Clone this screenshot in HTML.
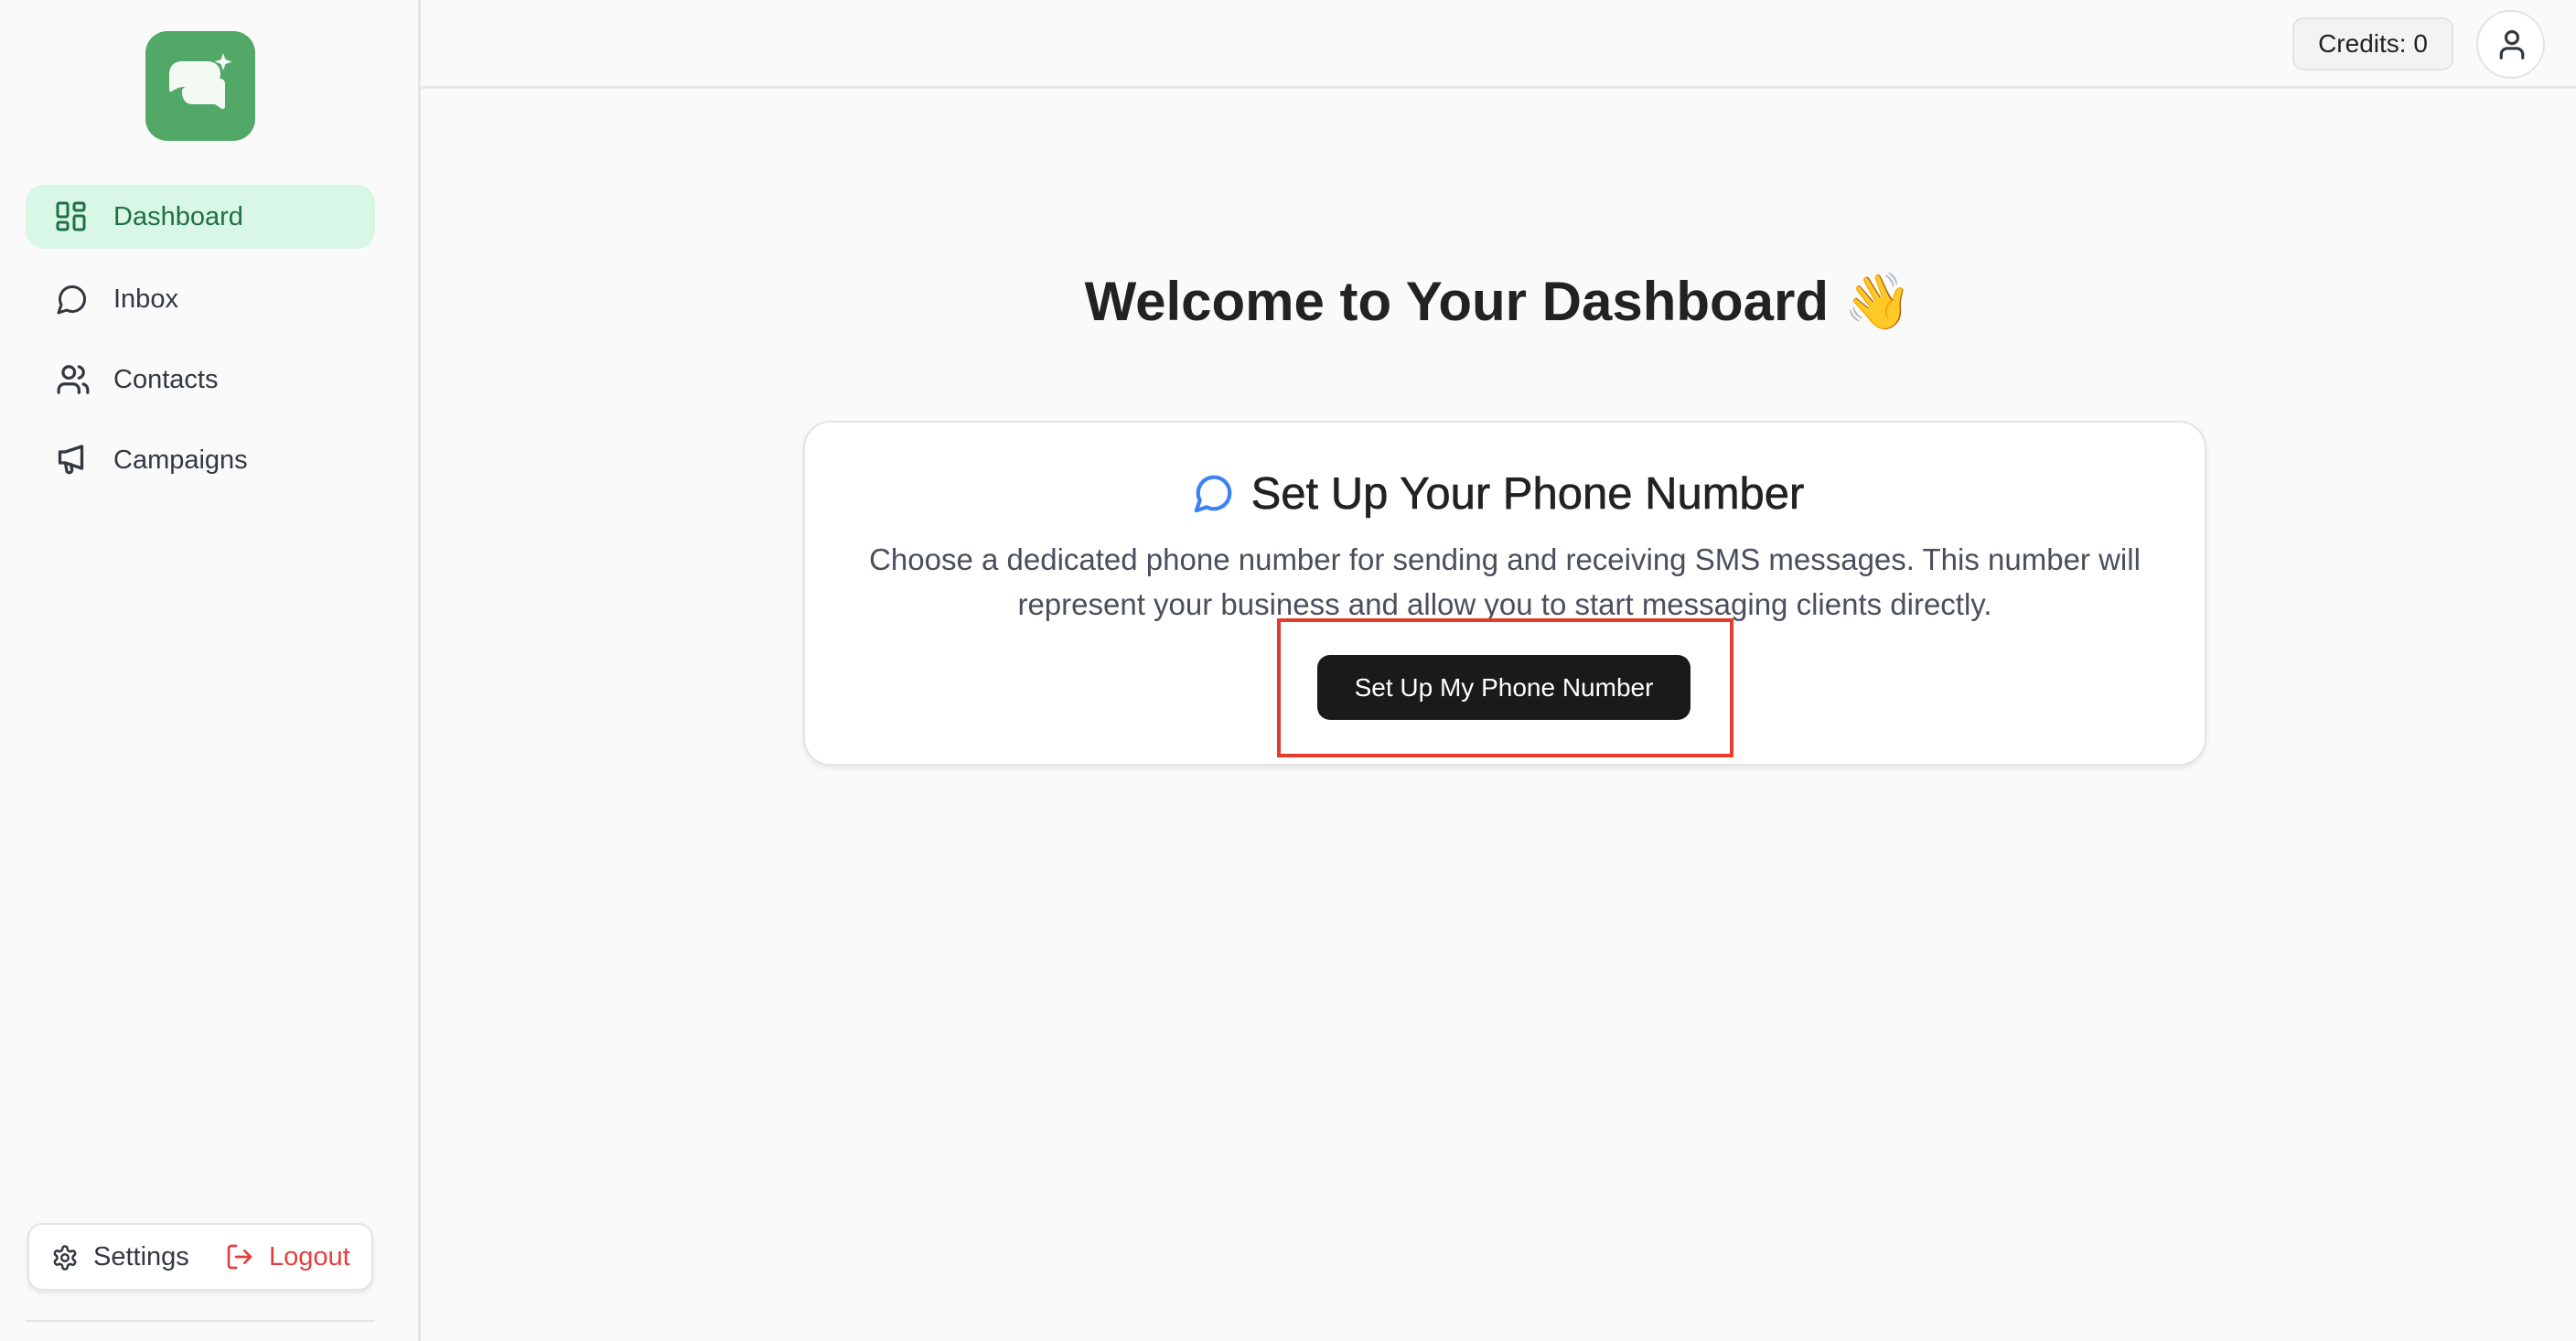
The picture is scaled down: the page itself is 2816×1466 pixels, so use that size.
<!DOCTYPE html>
<html><head><meta charset="utf-8"><style>
*{box-sizing:border-box;margin:0;padding:0}
body{width:2816px;height:1466px;background:#fafafa;font-family:"Liberation Sans",sans-serif;position:relative;overflow:hidden;color:#27272a}
.side{position:absolute;left:0;top:0;width:460px;height:1466px;border-right:3px solid #e6e6e6;background:#fafafa}
.logo{position:absolute;left:159px;top:34px;width:120px;height:120px;background:#52a866;border-radius:24px}
.nav{position:absolute;left:28px;width:382px;height:70px;border-radius:20px;display:flex;align-items:center;font-size:29px;color:#333740}
.nav svg{position:absolute;left:33px}
.nav span{position:absolute;left:96px}
.act{background:#d9f7e6;color:#1f6f4a}
.bot{position:absolute;left:30px;top:1337px;width:378px;height:74px;background:#fff;border:2px solid #e4e4e4;border-radius:16px;box-shadow:0 3px 5px rgba(0,0,0,.08);font-size:29px}
.top{position:absolute;left:460px;top:0;right:0;height:97px;border-bottom:3px solid #e6e6e6}
.cred{position:absolute;left:2506px;top:19px;width:176px;height:58px;border:2px solid #e3e3e3;border-radius:12px;background:#f3f3f3;font-size:28px;display:flex;align-items:center;justify-content:center;color:#222}
.av{position:absolute;left:2707px;top:11px;width:75px;height:75px;border:2px solid #e3e3e3;border-radius:50%;background:#fff}
h1{position:absolute;left:460px;right:0;top:294px;text-align:center;font-size:60px;font-weight:bold;color:#222}
.card{position:absolute;left:878px;top:460px;width:1534px;height:377px;background:#fff;border:2px solid #e4e4e4;border-radius:30px;box-shadow:0 3px 6px rgba(0,0,0,.08)}
.ct{position:absolute;left:0;right:0;top:512px;text-align:center;font-size:49px;color:#222;-webkit-text-stroke:0.6px #222}
.p{position:absolute;left:878px;width:1534px;text-align:center;font-size:33px;color:#4b4e5c;line-height:49px;top:587px}
.btn{position:absolute;left:1440px;top:716px;width:408px;height:71px;background:#1a1a1c;border-radius:14px;color:#fff;font-size:28px;display:flex;align-items:center;justify-content:center}
.red{position:absolute;left:1396px;top:676px;width:499px;height:152px;border:4px solid #e53b2a}
</style></head><body>
<div class="side">
<div class="logo"><svg width="120" height="120" viewBox="0 0 120 120"><path d="M26 48c0-10 5-15 15-15h26c10 0 15 6 15 14 0 9-6 14-15 14H42c-5 0-9 2-13 5-2 1-3 0-3-2z" fill="#f3faf4"/><path d="M40 66c0-3 2-5 5-5h21c8 0 13-4 15-9 4 0 6 2 6 6v24c0 3-2 4-5 2l-6-4H52c-8 0-12-5-12-14z" fill="#f3faf4"/><path d="M85 24l2.5 7 7 2.5-7 2.5-2.5 7-2.5-7-7-2.5 7-2.5z" fill="#f3faf4"/></svg></div>
<div class="nav act" style="top:202px"><svg width="34" height="34" viewBox="0 0 34 34" fill="none" stroke="#1f6f4a" stroke-width="3"><rect x="2" y="2" width="11" height="15" rx="2"/><rect x="20" y="2" width="11" height="8" rx="2"/><rect x="20" y="16" width="11" height="15" rx="2"/><rect x="2" y="23" width="11" height="8" rx="2"/></svg><span>Dashboard</span></div>
<div class="nav" style="top:292px"><svg width="36" height="36" viewBox="0 0 24 24" fill="none" stroke="#333740" stroke-width="2" stroke-linecap="round" stroke-linejoin="round"><path d="M7.9 20A9 9 0 1 0 4 16.1L2 22z"/></svg><span>Inbox</span></div>
<div class="nav" style="top:380px"><svg width="38" height="38" viewBox="0 0 24 24" fill="none" stroke="#333740" stroke-width="2" stroke-linecap="round"><circle cx="9" cy="7" r="4"/><path d="M2 21v-2a4 4 0 0 1 4-4h6a4 4 0 0 1 4 4v2M16 3.1a4 4 0 0 1 0 7.8M22 21v-2a4 4 0 0 0-3-3.9"/></svg><span>Contacts</span></div>
<div class="nav" style="top:468px"><svg width="36" height="36" viewBox="0 0 24 24" fill="none" stroke="#333740" stroke-width="2.2" stroke-linecap="round" stroke-linejoin="round"><path d="M3 6h4l12-4v16L7 14H3z"/><path d="M7 14l1 6a2 2 0 0 0 3.8-1L11 15"/></svg><span>Campaigns</span></div>
<div class="bot">
<svg style="position:absolute;left:24px;top:21px" width="30" height="30" viewBox="0 0 24 24" fill="none" stroke="#333740" stroke-width="2"><path d="M12.2 2h-.4a2 2 0 0 0-2 2v.2a2 2 0 0 1-1 1.7l-.4.3a2 2 0 0 1-2 0l-.2-.1a2 2 0 0 0-2.7.7l-.2.4a2 2 0 0 0 .7 2.7l.2.1a2 2 0 0 1 1 1.7v.5a2 2 0 0 1-1 1.7l-.2.1a2 2 0 0 0-.7 2.7l.2.4a2 2 0 0 0 2.7.7l.2-.1a2 2 0 0 1 2 0l.4.3a2 2 0 0 1 1 1.7V20a2 2 0 0 0 2 2h.4a2 2 0 0 0 2-2v-.2a2 2 0 0 1 1-1.7l.4-.3a2 2 0 0 1 2 0l.2.1a2 2 0 0 0 2.7-.7l.2-.4a2 2 0 0 0-.7-2.7l-.2-.1a2 2 0 0 1-1-1.7v-.5a2 2 0 0 1 1-1.7l.2-.1a2 2 0 0 0 .7-2.7l-.2-.4a2 2 0 0 0-2.7-.7l-.2.1a2 2 0 0 1-2 0l-.4-.3a2 2 0 0 1-1-1.7V4a2 2 0 0 0-2-2z"/><circle cx="12" cy="12" r="3"/></svg>
<span style="position:absolute;left:70px;top:19px;color:#333740">Settings</span>
<svg style="position:absolute;left:214px;top:19px" width="32" height="32" viewBox="0 0 24 24" fill="none" stroke="#e53e3e" stroke-width="2" stroke-linecap="round" stroke-linejoin="round"><path d="M9 21H5a2 2 0 0 1-2-2V5a2 2 0 0 1 2-2h4M16 17l5-5-5-5M21 12H9"/></svg>
<span style="position:absolute;left:262px;top:19px;color:#e53e3e">Logout</span>
</div>
<div style="position:absolute;left:28px;top:1443px;width:382px;height:2px;background:#e3e3e3"></div>
</div>
<div class="top"></div>
<div class="cred">Credits: 0</div>
<div class="av"><svg style="position:absolute;left:21px;top:19px" width="32" height="34" viewBox="0 0 24 26" fill="none" stroke="#333740" stroke-width="2.4" stroke-linecap="round"><circle cx="12" cy="7" r="5"/><path d="M3 24v-3a5 5 0 0 1 5-5h8a5 5 0 0 1 5 5v3"/></svg></div>
<h1>Welcome to Your Dashboard 👋</h1>
<div class="card"></div>
<div class="ct" style="left:460px"><svg style="vertical-align:-6px;margin-right:18px" width="46" height="46" viewBox="0 0 24 24" fill="none" stroke="#3b82f6" stroke-width="2.2" stroke-linecap="round" stroke-linejoin="round"><path d="M7.9 20A9 9 0 1 0 4 16.1L2 22z"/></svg>Set Up Your Phone Number</div>
<div class="p">Choose a dedicated phone number for sending and receiving SMS messages. This number will<br>represent your business and allow you to start messaging clients directly.</div>
<div class="btn">Set Up My Phone Number</div>
<div class="red"></div>
</body></html>
